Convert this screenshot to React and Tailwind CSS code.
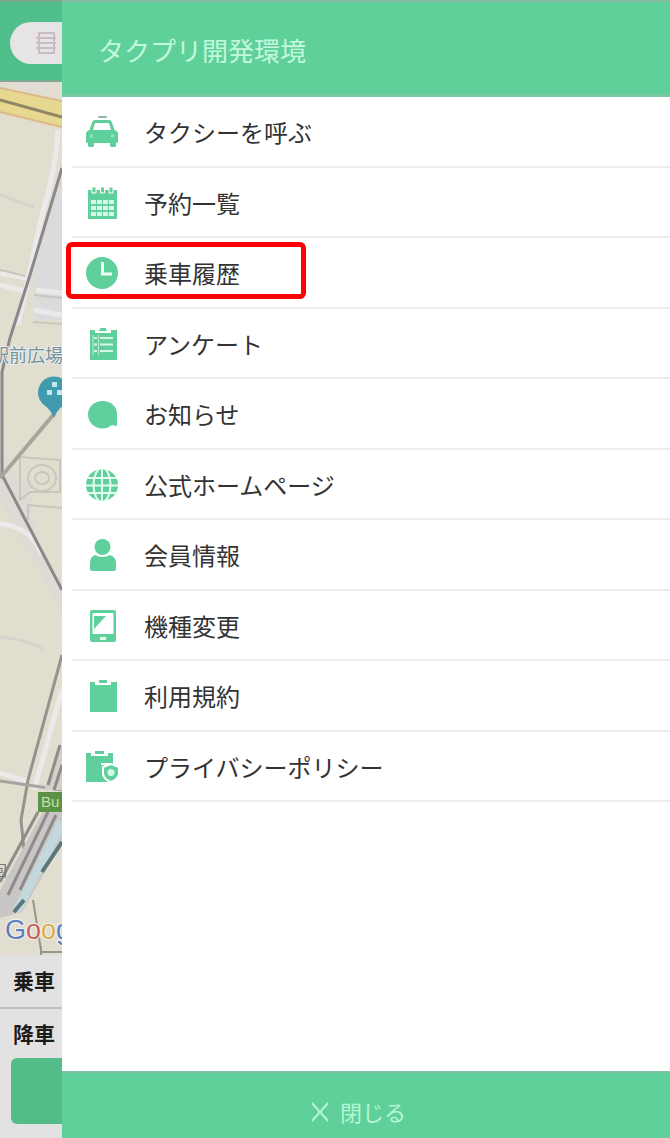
import React from 'react';

const TaxiIcon = () => (
    <svg viewBox="0 0 32 32" className="size-8 shrink-0" fill="#5fd09b" aria-hidden="true">
        <rect x="12" y="0" width="9" height="2" rx="1" fill="#8fb8a4" />
        <path fillRule="evenodd" d="M9 4h14q2 0 2.800 2l2.700 8q3.500 1 3.500 4v7.500q0 1.500-1.500 1.500H30v2.500q0 1.500-1.500 1.500h-3q-1.500 0-1.500-1.500V27H8v2.500Q8 31 6.500 31h-3Q2 31 2 29.500V27h-.5Q0 27 0 25.500V18q0-3 3.500-4l2.700-8Q7 4 9 4zM9.800 7q-.8 0-1.100 1L7 14h18l-1.700-6q-.3-1-1.100-1z" />
        <circle cx="5.500" cy="20" r="2" fill="#8fdfb8" />
        <circle cx="26.500" cy="20" r="2" fill="#8fdfb8" />
    </svg>
);

const CalendarIcon = () => (
    <svg viewBox="0 0 32 32" className="size-8 shrink-0" fill="#5fd09b" aria-hidden="true">
        <path d="M2 3h29v29H2z" />
        <path d="M6 0h4v6H6zM14.500 0h4v6h-4zM23 0h4v6h-4z" stroke="#fff" />
        <g fill="#d6f7e6">
            <path d="M5 13h5v4H5zM11 13h5v4h-5zM17 13h5v4h-5zM23 13h5v4h-5z" />
            <path d="M5 19h5v4H5zM11 19h5v4h-5zM17 19h5v4h-5zM23 19h5v4h-5z" />
            <path d="M5 25h5v4H5zM11 25h5v4h-5zM17 25h5v4h-5zM23 25h5v4h-5z" />
        </g>
    </svg>
);

const ClockIcon = () => (
    <svg viewBox="0 0 32 32" className="size-8 shrink-0" aria-hidden="true">
        <circle cx="16" cy="16" r="16" fill="#5fd09b" />
        <path d="M16.500 5v12H26" fill="none" stroke="#f2fff8" strokeWidth="3" />
    </svg>
);

const SurveyIcon = () => (
    <svg viewBox="0 0 32 32" className="size-8 shrink-0" fill="#5fd09b" aria-hidden="true">
        <path d="M4 2h27v30H4z" />
        <path d="M9 1v4h16V1h-4v2h-8V1z" fill="#fff" />
        <path d="M14 0h6v3h-6z" />
        <path d="M8 10h3M14 10h13M8 16.500h3M14 16.500h13M8 23h3M14 23h13" stroke="#d6f7e6" strokeWidth="2" />
        <path d="M7 7v20M12.500 7v20" stroke="#b5edd0" strokeWidth="1" />
    </svg>
);

const BubbleIcon = () => (
    <svg viewBox="0 0 32 32" className="size-8 shrink-0" fill="#5fd09b" aria-hidden="true">
        <path d="M16.500 3C25 3 31 8.500 31 15.500V28l-5-1c-3 2.500-6 3.500-9.500 3.500C8 30.500 2 24 2 16.500S8 3 16.500 3z" />
    </svg>
);

const GlobeIcon = () => (
    <svg viewBox="0 0 32 32" className="size-8 shrink-0" aria-hidden="true">
        <circle cx="16" cy="16" r="16" fill="#5fd09b" />
        <g fill="none" stroke="#e4fbef" strokeWidth="2">
            <path d="M16 0v32M1 9h30M0 16.500h32M1 24h30" />
            <ellipse cx="16" cy="16" rx="8.500" ry="17" />
        </g>
    </svg>
);

const MemberIcon = () => (
    <svg viewBox="0 0 32 32" className="size-8 shrink-0" fill="#5fd09b" aria-hidden="true">
        <circle cx="16.500" cy="8" r="8" />
        <path d="M9 16q7.500 4 15 0 6 2 6 8v6q0 2-2 2H6q-2 0-2-2v-6q0-6 5-8z" />
    </svg>
);

const DeviceIcon = () => (
    <svg viewBox="0 0 32 32" className="size-8 shrink-0" fill="#5fd09b" aria-hidden="true">
        <rect x="4" y="0" width="26" height="32" rx="2" />
        <path d="M6.500 3h21v21h-21z" fill="#fff" />
        <path d="M8 6h12L8 19z" />
        <path d="M14 27h6v3h-6z" fill="#e4fbef" />
    </svg>
);

const TermsIcon = () => (
    <svg viewBox="0 0 32 32" className="size-8 shrink-0" fill="#5fd09b" aria-hidden="true">
        <path d="M4 2h27v30H4z" />
        <path d="M9 1v4h16V1h-4v2h-8V1z" fill="#fff" />
        <path d="M13 0h8v3h-8z" />
    </svg>
);

const PrivacyIcon = () => (
    <svg viewBox="0 0 32 32" className="size-8 shrink-0" fill="#5fd09b" aria-hidden="true">
        <path d="M0 2h27v29H0z" />
        <path d="M5 1v4h17V1h-4v2H9V1z" fill="#fff" />
        <path d="M9 0h9v3H9z" />
        <path d="M15 13h9" stroke="#fff" strokeWidth="2" />
        <path d="M25 13l8 3v6q0 6-8 9-8-3-8-9v-6z" stroke="#fff" strokeWidth="2" />
        <circle cx="25" cy="21.500" r="3.500" fill="#d6f7e6" />
    </svg>
);

const menuItems = [
    { label: 'タクシーを呼ぶ', Icon: TaxiIcon },
    { label: '予約一覧', Icon: CalendarIcon },
    { label: '乗車履歴', Icon: ClockIcon, marked: true },
    { label: 'アンケート', Icon: SurveyIcon },
    { label: 'お知らせ', Icon: BubbleIcon },
    { label: '公式ホームページ', Icon: GlobeIcon },
    { label: '会員情報', Icon: MemberIcon },
    { label: '機種変更', Icon: DeviceIcon },
    { label: '利用規約', Icon: TermsIcon },
    { label: 'プライバシーポリシー', Icon: PrivacyIcon },
];

// Street map, only its left edge shows beside the drawer
const StreetMap = () => (
    <svg viewBox="0 82 62 873" preserveAspectRatio="xMinYMin slice" className="min-h-0 w-full flex-1" aria-label="地図">
        <rect y="82" width="62" height="873" fill="#e2decf" />
        <path d="M0 82h62v8H0z" fill="#e2dcd2" />
        <path d="M0 88l62 14v26L0 113z" fill="#e6d88f" />
        <path d="M0 88l62 13M0 112l62 15" stroke="#dcb98a" strokeWidth="2" />
        <path d="M0 100l62 17" stroke="#8f8668" strokeWidth="3" />
        <path d="M62 165L34 270v50h28z" fill="#dbdbdb" />
        <path d="M0 380l8 90 22 10 8 70 24 40v25L0 500z" fill="#dedbd4" />
        <g fill="none" stroke="#ebe9ea" strokeWidth="5">
            <path d="M58 130q-2 40-16 85L18 325M0 273l26 5M0 285l24 6M36 290l26 3M34 310l28 5M0 524q30 2 42 30" />
            <path d="M0 773l26 8M62 690L34 790" />
        </g>
        <path d="M0 195l34 12M0 637q30 3 42 12" fill="none" stroke="#d6d2cc" strokeWidth="3" />
        <g fill="none" stroke="#c9c6c0" strokeWidth="2">
            <path d="M20 500v-43l40 3v32H30zM28 520v-15l34 3" />
            <ellipse cx="42" cy="478" rx="14" ry="13" />
            <ellipse cx="42" cy="478" rx="7" ry="6" />
            <path d="M34 295l28 3M33 322l29 2M0 270l25 6" />
        </g>
        <path d="M62 168L30 275 10 338 2 372V475L62 590" fill="none" stroke="#8b878a" strokeWidth="3" />
        <path d="M0 478L54 414" stroke="#a9a59b" strokeWidth="4" />
        <path d="M62 655L28 780 21 820l3 30" fill="none" stroke="#96928f" strokeWidth="3" />
        <path d="M0 781l62 9" stroke="#a7a4a2" strokeWidth="3" />
        <path d="M44 810L22 850 0 890v28l22-6 40-70v-30z" fill="#c9c7c6" />
        <path d="M62 745L44 790h18z" fill="#d2cfc9" />
        <g stroke="#8e8b88" strokeWidth="3">
            <path d="M60 745L48 785M62 765L54 790M48 812L8 895M56 815L20 890M38 812L0 882" />
        </g>
        <path d="M62 822L38 870 16 912" fill="none" stroke="#c3d8dc" strokeWidth="9" />
        <path d="M62 842L42 872M24 900L14 912" stroke="#5a7779" strokeWidth="4" />
        <path d="M33 900l8 50M40 952h22M41 946v12" fill="none" stroke="#98968a" strokeWidth="2" />
        <text x="-9" y="362" fontSize="18" fill="#74939a" stroke="#e8eceb" strokeWidth="2" paintOrder="stroke" fontFamily="'Noto Sans CJK JP', sans-serif">駅前広場</text>
        <path d="M54 418q-3-8-10-13a16 16 0 1 1 20 0q-7 5-10 13z" fill="#3f9bad" />
        <g fill="#c4e6ee">
            <path d="M52 382h5v5h-5zM47 390h5v5h-5zM57 390h5v5h-5z" />
        </g>
        <rect x="38" y="792" width="26" height="20" fill="#5a9343" />
        <text x="41" y="807" fontSize="15" fill="#c5dfad" fontFamily="'Liberation Sans', sans-serif">Bu</text>
        <text x="-8" y="876" fontSize="15" fill="#77777f" fontFamily="'Noto Sans CJK JP', sans-serif">回</text>
        <text x="5" y="939" fontSize="27" stroke="#f4f2ee" strokeWidth="2" paintOrder="stroke" fontFamily="'Liberation Sans', sans-serif">
            <tspan fill="#5a7fc0">G</tspan>
            <tspan fill="#c9605f">o</tspan>
            <tspan fill="#d6ae4a">o</tspan>
            <tspan fill="#5a7fc0">g</tspan>
        </text>
    </svg>
);

function BookingScreen() {
    return (
        <div className="flex w-[62px] shrink-0 flex-col overflow-hidden bg-[#e3e2e2]">
            <header className="flex h-[82px] shrink-0 items-center border-t-2 border-b-2 border-[#7fa892] bg-[#50bf8b] pt-1 pl-2.5">
                <button type="button" aria-label="一覧" className="flex h-[42px] w-20 shrink-0 items-center rounded-full bg-[#e6e4e5] pl-[26px]">
                    <svg viewBox="0 0 20 24" className="h-6 w-5" fill="none" stroke="#cbbcc2" strokeWidth="2" aria-hidden="true">
                        <path d="M3 2h15v20H3zM0 7h20M0 12h20M0 17h20" />
                    </svg>
                </button>
            </header>
            <StreetMap />
            <div className="flex h-[54px] shrink-0 items-center border-b-2 border-[#bdbdbd] pl-[13px] text-[21px] font-bold whitespace-nowrap text-[#1c1c1c]">乗車</div>
            <div className="flex h-[49px] shrink-0 items-center pl-[13px] text-[21px] font-bold whitespace-nowrap text-[#1c1c1c]">降車</div>
            <button type="button" aria-label="配車" className="mb-3.5 ml-[11px] h-[66px] w-40 shrink-0 rounded-md bg-[#53bd89]" />
        </div>
    );
}

export default function App() {
    return (
        <div className="flex min-h-screen overflow-hidden bg-white font-['Noto_Sans_CJK_JP',sans-serif]">
            <BookingScreen />

            <div className="flex min-w-0 flex-1 flex-col bg-white">
                <header className="flex h-[97px] shrink-0 items-center border-t-2 border-b-3 border-t-[#82bba0] border-b-[#7cc8a4] bg-[#60d09b] pl-9">
                    <h1 className="pt-1 text-[26px] leading-8 text-[#c3f8dc]">タクプリ開発環境</h1>
                </header>

                <nav className="flex-1">
                    <ul className="grid h-[705px] auto-rows-fr pl-2.5">
                        {menuItems.map(({ label, Icon, marked }) => (
                            <li key={label} className="relative border-b-2 border-[#ececec]">
                                <a href="#" className="flex h-full items-center gap-[26px] pt-0.5 pl-3.5 text-2xl text-[#333]">
                                    <Icon />
                                    <span>{label}</span>
                                </a>
                                {marked && (
                                    <span className="pointer-events-none absolute top-1 -left-1.5 h-[57px] w-[240px] rounded-md border-5 border-[#ff0000]" />
                                )}
                            </li>
                        ))}
                    </ul>
                </nav>

                <button type="button" className="flex h-[67px] shrink-0 items-center justify-center gap-2.5 border-t-2 border-[#7fc3a0] bg-[#60d09b] pt-3 pr-4 text-[22px] text-[#b5f5d6]">
                    <svg viewBox="0 0 20 20" className="size-5" fill="none" stroke="currentColor" strokeWidth="2" aria-hidden="true">
                        <path d="M2 1l16 18M18 1L2 19" />
                    </svg>
                    閉じる
                </button>
            </div>
        </div>
    );
}
